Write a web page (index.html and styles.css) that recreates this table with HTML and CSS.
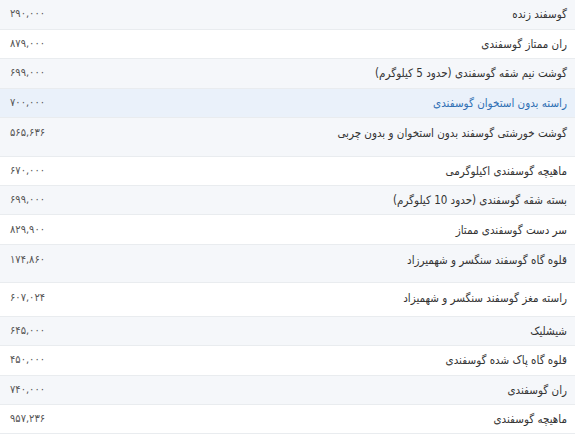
FILE: index.html
```html
<!DOCTYPE html>
<html lang="fa" dir="rtl">
<head>
<meta charset="utf-8">
<title>قیمت گوشت گوسفندی</title>
<link rel="stylesheet" href="styles.css">
</head>
<body>
<table class="prices">
  <tbody>
    <tr><td class="name">گوسفند زنده</td><td class="price">۲۹۰,۰۰۰</td></tr>
    <tr><td class="name">ران ممتاز گوسفندی</td><td class="price">۸۷۹,۰۰۰</td></tr>
    <tr><td class="name">گوشت نیم شقه گوسفندی (حدود 5 کیلوگرم)</td><td class="price">۶۹۹,۰۰۰</td></tr>
    <tr class="active"><td class="name">راسته بدون استخوان گوسفندی</td><td class="price">۷۰۰,۰۰۰</td></tr>
    <tr class="tall tall-a"><td class="name">گوشت خورشتی گوسفند بدون استخوان و بدون چربی</td><td class="price">۵۶۵,۶۳۶</td></tr>
    <tr><td class="name">ماهیچه گوسفندی اکیلوگرمی</td><td class="price">۶۷۰,۰۰۰</td></tr>
    <tr><td class="name">بسته شقه گوسفندی (حدود 10 کیلوگرم)</td><td class="price">۶۹۹,۰۰۰</td></tr>
    <tr><td class="name">سر دست گوسفندی ممتاز</td><td class="price">۸۲۹,۹۰۰</td></tr>
    <tr class="tall tall-b"><td class="name">قلوه گاه گوسفند سنگسر و شهمیرزاد</td><td class="price">۱۷۴,۸۶۰</td></tr>
    <tr class="tall tall-c"><td class="name">راسته مغز گوسفند سنگسر و شهمیزاد</td><td class="price">۶۰۷,۰۲۴</td></tr>
    <tr><td class="name">شیشلیک</td><td class="price">۶۴۵,۰۰۰</td></tr>
    <tr><td class="name">قلوه گاه پاک شده گوسفندی</td><td class="price">۴۵۰,۰۰۰</td></tr>
    <tr><td class="name">ران گوسفندی</td><td class="price">۷۴۰,۰۰۰</td></tr>
    <tr><td class="name">ماهیچه گوسفندی</td><td class="price">۹۵۷,۲۳۶</td></tr>
  </tbody>
</table>
</body>
</html>
```

FILE: styles.css
```css
html, body {
  margin: 0;
  padding: 0;
  background: #ffffff;
}

body {
  font-family: "DejaVu Sans Condensed", "DejaVu Sans", sans-serif;
  font-size: 11.5px;
  color: #333333;
}

.prices {
  width: 100%;
  border-collapse: collapse;
  border-spacing: 0;
}

.prices tr {
  height: 29.4px;
}

.prices tr:nth-child(odd) {
  background: #f5f7fa;
}

.prices tr.active {
  background: #eaf1fa;
}

.prices tr.active .name {
  color: #2f6fb3;
}

.prices td {
  border-bottom: 1px solid #e9ecef;
  padding: 0;
  line-height: 20px;
  vertical-align: middle;
  white-space: nowrap;
}

.prices .name {
  text-align: right;
  padding-right: 8px;
}

.prices .price {
  text-align: left;
  padding-left: 10px;
  width: 120px;
  color: #555555;
  font-size: 11px;
}

.prices tr.tall td {
  vertical-align: top;
  padding-top: 5px;
}

.prices tr.tall-a { height: 38.5px; }
.prices tr.tall-b { height: 38px; }
.prices tr.tall-c { height: 34px; }
```
